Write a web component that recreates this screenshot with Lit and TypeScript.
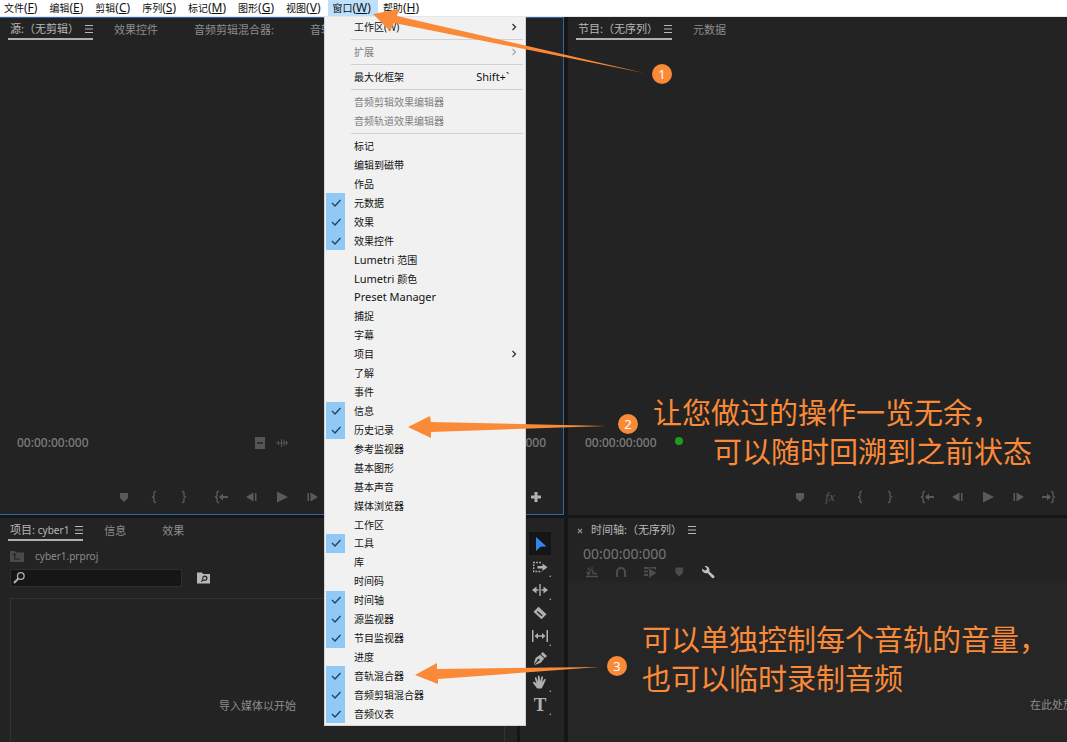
import { LitElement, html, css, svg, nothing } from "lit";
import { customElement } from "lit/decorators.js";
import { classMap } from "lit/directives/class-map.js";

type Item = { label: string; on?: boolean; off?: boolean; sub?: boolean; key?: string } | "-";

const plain = (...labels: string[]): Item[] => labels.map((label) => ({ label }));
const on = (...labels: string[]): Item[] => labels.map((label) => ({ label, on: true }));

const WINDOW_MENU: Item[] = [
  { label: "工作区(W)", sub: true },
  "-",
  { label: "扩展", sub: true, off: true },
  "-",
  { label: "最大化框架", key: "Shift+`" },
  "-",
  { label: "音频剪辑效果编辑器", off: true },
  { label: "音频轨道效果编辑器", off: true },
  "-",
  ...plain("标记", "编辑到磁带", "作品"),
  ...on("元数据", "效果", "效果控件"),
  ...plain("Lumetri 范围", "Lumetri 颜色", "Preset Manager", "捕捉", "字幕"),
  { label: "项目", sub: true },
  ...plain("了解", "事件"),
  ...on("信息", "历史记录"),
  ...plain("参考监视器", "基本图形", "基本声音", "媒体浏览器", "工作区"),
  ...on("工具"),
  ...plain("库", "时间码"),
  ...on("时间轴", "源监视器", "节目监视器"),
  ...plain("进度"),
  ...on("音轨混合器", "音频剪辑混合器", "音频仪表"),
];

const MENUS: [string, string][] = [
  ["文件", "F"], ["编辑", "E"], ["剪辑", "C"], ["序列", "S"], ["标记", "M"],
  ["图形", "G"], ["视图", "V"], ["窗口", "W"], ["帮助", "H"],
];

/* Icons are drawn on a 16 by 16 grid, filled with the current colour. */
const ICONS: Record<string, unknown> = {
  marker: svg`<path d="M4 4h8v5l-4 4-4-4z"/>`,
  markIn: svg`<path class="line" d="M10 2.500h-1l-1 1v3.500l-1.500 1 1.500 1v3.500l1 1h1"/>`,
  markOut: svg`<path class="line" d="M6 2.500h1l1 1v3.500l1.500 1-1.500 1v3.500l-1 1h-1"/>`,
  goIn: svg`<path class="line" d="M5 2.500h-1l-1 1v3.500l-1.500 1 1.500 1v3.500l1 1h1"/><path d="M5 8l4-3.500v2.500h5v2h-5v2.500z"/>`,
  goOut: svg`<path class="line" d="M11 2.500h1l1 1v3.500l1.500 1-1.500 1v3.500l-1 1h-1"/><path d="M11 8l-4-3.500v2.500h-5v2h5v2.500z"/>`,
  back: svg`<path d="M2 8l7.500-4.500v9zM11 4h1.500v8h-1.500z"/>`,
  play: svg`<path d="M3 2.500l11 5.500-11 5.500z"/>`,
  fwd: svg`<path d="M14 8l-7.500-4.500v9zM3.500 4h1.500v8h-1.500z"/>`,
  plus: svg`<path d="M6.500 3h3v3.500h3.500v3h-3.500v3.500h-3v-3.500h-3.500v-3h3.500z"/>`,
  film: svg`<path fill-rule="evenodd" d="M3 2h10v12h-10zM5 7.300v1.400h6v-1.400z"/>`,
  wave: svg`<path d="M2 7.500h12v1h-12zM4 6h1v4h-1zM7 4h1v8h-1zM9.500 5h1v6h-1zM12 6h1v4h-1z"/>`,
  lines: svg`<path d="M4 4h8v1h-8zM4 7.500h8v1h-8zM4 11h8v1h-8z"/>`,
  folderUp: svg`<path fill-rule="evenodd" d="M1 3h5l1 1.500h8v9.500h-14zM5 7v4.500h6v-1h-4.800v-3.500h1.500l-2.200-2-2.200 2z"/>`,
  folderFind: svg`<path fill-rule="evenodd" d="M1 2.500h5l1 1.500h7v9.500h-13zM8.700 5.500a2.700 2.700 0 0 0-2.200 4l-1.700 1.700.9.900 1.700-1.600a2.700 2.700 0 1 0 1.300-5zm0 1.200a1.500 1.500 0 1 1 0 3 1.500 1.500 0 0 1 0-3z"/>`,
  find: svg`<circle class="line" cx="9.800" cy="6" r="3.300"/><path class="line thick" d="M7.300 8.500l-4.300 4.500"/>`,
  nest: svg`<path class="line" d="M2 12.500h12M8 3v4M4 4l2.500 3M2.500 8.500h4M9 6.500v4M9 9l4 1M6 10l-3 .5"/>`,
  magnet: svg`<path class="line thick" d="M4 13v-5a4 4 0 0 1 8 0v5"/>`,
  linked: svg`<path d="M2 3h5v2h-5zM2 6.500h4v2h-4zM2 10h4v2h-4zM8 3h6v3l-2-1.500h-4zM7 4.500l7.500 4.300-7.500 5.200z"/>`,
  flag: svg`<path d="M4.500 3.500h7.500v5.300l-3.700 3.700-3.800-3.700z"/>`,
  wrench: svg`<path d="M4.500 2.200a4 4 0 0 1 4.800 5.200l5 4.600c.8 1.200-.9 2.800-2.100 1.900l-4.700-5a4 4 0 0 1-5.400-4.500l2.500 2.100 1.800-.5.500-1.700z"/>`,
  select: svg`<path d="M4 1l10.500 9.500-6 .3-4.500 4.200z"/>`,
  track: svg`<path class="dash" d="M9 3.500h-7.300v9h8"/><path d="M5.500 7h5v-2.500l5 3.700-5 3.700v-2.500h-5z"/>`,
  ripple: svg`<path d="M7.300 2h1.400v12h-1.400zM0 8l4.500-3.500v2.700h2v1.600h-2v2.700zM16 8l-4.500-3.500v2.700h-2v1.600h2v2.700z"/>`,
  razor: svg`<path fill-rule="evenodd" d="M6.500 1.800l8 7.500-5 4.900-8-7.500zM5.700 6l-.9.900 4.900 4.300.9-.9z"/>`,
  slip: svg`<path d="M0 2h1.500v12h-1.500zM14.500 2h1.500v12h-1.500zM2.500 8l3.500-3v2.300h4v-2.300l3.500 3-3.500 3v-2.300h-4v2.300z"/>`,
  pen: svg`<path fill-rule="evenodd" d="M10.800 1l4.200 4-2 2-4.200-4zM8.200 3.700l4 3.900-3.500 4.200-6.400 2.400 3.700-4a1.200 1.200 0 1 0-.7-.7l-3.700 4 2-6.600z"/>`,
  hand: svg`<path d="M5.200 14.500l-4-5.200c-.7-1 .5-1.900 1.400-1.200l1.900 1.500-1.600-5.200c-.2-1.200 1.200-1.500 1.600-.5l1.500 3.900-.2-5.300c.1-1.200 1.600-1.200 1.800 0l.6 5.100 1.100-4.700c.4-1.100 1.800-.8 1.700.4l-.7 4.900 1.800-2.800c.8-.9 1.900-.2 1.500.8l-2.400 5.300-1.600 3z"/>`,
};

const icon = (name: string) => html`<svg class="icon" viewBox="0 0 16 16" aria-hidden="true">${ICONS[name]}</svg>`;

const base = css`
  * { box-sizing: border-box; }
  button {
    appearance: none; border: 0; background: none; padding: 0; margin: 0;
    font: inherit; color: inherit; text-align: left; white-space: nowrap;
  }
  .icon { width: 16px; height: 16px; display: block; fill: currentColor; flex: none; }
  .line { fill: none; stroke: currentColor; stroke-width: 1.3; }
  .thick { stroke-width: 2; }
  .dash { fill: none; stroke: currentColor; stroke-width: 1.4; stroke-dasharray: 1.800 1.200; }
`;

@customElement("window-menu")
export class WindowMenu extends LitElement {
  static styles = [base, css`
    :host {
      display: flex; flex-direction: column; padding: 1px 2px 2px 1px;
      background: #f1f1f1; border: 1px solid #d4d4d4; border-top: 0;
      color: #111; font-size: 10px; max-height: calc(100vh - 33px);
    }
    .item { flex: 0 1 19px; min-height: 0; display: flex; align-items: center; }
    .tick {
      width: 19px; align-self: stretch; flex: none; color: #25405c;
      display: flex; align-items: center; justify-content: center;
    }
    .on .tick { background: #90c8f6; }
    .label { padding-left: 9px; flex: 1; line-height: 16px; }
    .key { padding-right: 14px; font-size: 11px; }
    .sub { color: #333; margin-right: 1px; }
    .off { color: #808080; }
    .off .sub { color: #aaa; }
    .latin { font-size: 11px; }
    .rule { flex: 0 0 6px; margin-left: 25px; padding: 2px 0 3px; background: #d2d2d2; background-clip: content-box; }
  `];

  label(text: string) {
    const parts = text.match(/^([A-Za-z ]+)(.*)$/);
    return parts ? html`<span class="latin">${parts[1]}</span>${parts[2]}` : text;
  }

  render() {
    return WINDOW_MENU.map((it) =>
      it === "-"
        ? html`<div class="rule" role="separator"></div>`
        : html`<button class=${classMap({ item: true, on: !!it.on, off: !!it.off })} ?disabled=${!!it.off}>
            <span class="tick">${it.on
              ? html`<svg class="icon" viewBox="0 0 16 16"><path class="line" d="M4 8l3 3 5.500-6"/></svg>`
              : nothing}</span>
            <span class="label">${this.label(it.label)}</span>
            ${it.key ? html`<span class="key">${it.key}</span>` : nothing}
            ${it.sub
              ? html`<svg class="icon sub" viewBox="0 0 16 16"><path class="line" d="M6.500 5l3 3-3 3"/></svg>`
              : nothing}
          </button>`);
  }
}

@customElement("app-root")
export class AppRoot extends LitElement {
  static styles = [base, css`
    :host {
      display: flex; flex-direction: column; height: 100vh; overflow: hidden; position: relative;
      background: #161616; color: #8c8c8c;
      font-family: "Noto Sans", "Noto Sans CJK SC", sans-serif; font-size: 11px; line-height: 16px;
    }
    .menubar {
      flex: none; height: 17px; display: flex; background: #fff; color: #111;
      font-size: 10px; border-bottom: 1px solid #e6e6e6;
    }
    .menubar button { padding: 0 7px 0 4px; margin-right: 1px; }
    .menubar .open { background: #bfe0fb; }
    .hotkey { font-size: 12px; }
    .work {
      flex: 1; min-height: 0; display: grid; gap: 3px 4px;
      grid-template-columns: minmax(0, 564fr) minmax(0, 499fr);
      grid-template-rows: minmax(0, 498fr) minmax(0, 224fr);
    }
    .panel { background: #232323; overflow: hidden; display: flex; flex-direction: column; min-width: 0; }
    .focus { border: 1px solid #2b66a8; border-left: 0; }
    .tabs { display: flex; flex: none; height: 25px; padding: 0 8px; align-items: flex-start; margin-top: 2px; }
    .focus .tabs { margin-top: 1px; }
    .tabs button { height: 21px; line-height: 19px; margin-left: 36px; flex: none; }
    .tabs .active {
      margin-left: 0; padding-left: 2px; color: #b8b8b8; border-bottom: 2px solid #b0b0b0;
      display: flex; align-items: center;
    }
    .tabs .active .icon { margin: 0 -4px 0 2px; }
    .tabs .active + button { margin-left: 21px; }
    .tabs .bare { border-bottom-color: transparent; padding-left: 7px; }
    .small { font-size: 10px; }
    .close { width: 8px; height: 8px; margin-top: 7px; }
    .screen { flex: 1; }
    .status {
      display: flex; align-items: center; height: 20px; flex: none;
      padding: 0 17px; font-size: 12px; font-weight: 500; color: #7c7c7c;
    }
    .status .view { margin-left: 163px; display: flex; gap: 6px; color: #555; }
    .status .end { margin-left: auto; }
    .dot { width: 8px; height: 8px; border-radius: 50%; background: #1e9c1e; margin: 0 0 4px 18px; }
    .transport { display: flex; align-items: center; height: 20px; flex: none; margin: 34px 0 8px; color: #5a5a5a; }
    .focus .transport { margin-bottom: 7px; }
    .transport button { width: 30px; display: flex; justify-content: center; flex: none; }
    .transport .gap { margin-left: 8px; }
    .source { padding-left: 109px; }
    .program { padding-left: 217px; }
    .transport .add { margin-left: auto; margin-right: 12px; color: #b0b0b0; }
    .fx { font-style: italic; font-family: "Liberation Serif", serif; font-size: 13px; }
    .lower { display: grid; grid-template-columns: minmax(0, 1fr) 44px; gap: 3px; min-height: 0; }
    .path { display: flex; align-items: center; gap: 10px; height: 18px; flex: none; padding: 0 9px; margin-top: 2px; font-size: 10px; }
    .path .icon { color: #4a4a4a; }
    .search { display: flex; align-items: center; gap: 14px; padding: 0 10px; margin-top: 4px; flex: none; }
    .box { display: flex; align-items: center; width: 172px; height: 18px; background: #161616; border: 1px solid #2e2e2e; color: #b0b0b0; }
    .box input { flex: 1; min-width: 0; background: none; border: 0; outline: 0; color: inherit; font: inherit; }
    .search button { color: #b8b8b8; }
    .bin {
      flex: 1; margin: 11px 12px 0 10px; border: 1px solid #323232; border-bottom: 0;
      padding-top: 99px; text-align: center;
    }
    .tools { align-items: center; padding: 14px 4px 0 0; color: #b0b0b0; }
    .tools button {
      width: 22px; height: 23px; flex: none; display: flex; align-items: center; justify-content: center;
      position: relative;
    }
    .tools .picked { background: #151515; color: #2f86ee; }
    .tools .more::after {
      content: ""; position: absolute; right: 0; bottom: 1px;
      border: 1px solid #999; border-top-color: transparent; border-left-color: transparent;
    }
    .type { font-family: "Liberation Serif", serif; font-size: 19px; line-height: 20px; font-weight: 700; }
    .timecode { font-size: 14px; line-height: 18px; color: #767676; padding-left: 15px; flex: none; }
    .options { display: flex; gap: 13px; padding-left: 16px; height: 18px; align-items: center; flex: none; color: #4c4c4c; }
    .options .lit { color: #c0c0c0; }
    .drop { flex: 1; background: #262626; padding: 116px 0 0 462px; white-space: nowrap; }
    window-menu { position: absolute; left: 324px; top: 17px; width: 202px; z-index: 2; }
    .notes { position: absolute; left: 0; top: 0; width: 1067px; height: 742px; z-index: 3; pointer-events: none; }
    .arrow { fill: #fa8a38; }
    .badge {
      position: absolute; z-index: 4; width: 20px; height: 20px; border-radius: 50%;
      background: #fa8a38; color: #fff; font-size: 13px; line-height: 20px; text-align: center;
    }
    .b1 { left: 652px; top: 64px; }
    .b2 { left: 618px; top: 414px; }
    .b3 { left: 607px; top: 656px; }
    .note {
      position: absolute; z-index: 4; margin: 0; color: #fa8a38; white-space: nowrap;
      font-family: "Noto Sans CJK SC", sans-serif; font-size: 29px; line-height: 39px;
    }
    .n2 { left: 653px; top: 392px; }
    .n3 { left: 642px; top: 619px; }
    .indent { display: block; padding-left: 60px; }
  `];

  tab(text: unknown) {
    return html`<button class="active"><span>${text}</span>${icon("lines")}</button>`;
  }

  render() {
    const buttons = (names: string[]) => names.map((n) => html`<button aria-label=${n}>${icon(n)}</button>`);
    return html`
      <nav class="menubar">
        ${MENUS.map(([name, key]) => html`<button class=${key === "W" ? "open" : ""}>${name}<span class="hotkey">(<u>${key}</u>)</span></button>`)}
      </nav>

      <main class="work">
        <section class="panel focus">
          <div class="tabs">
            ${this.tab("源:（无剪辑）")}
            <button>效果控件</button><button>音频剪辑混合器:</button><button>音轨混合器:</button>
          </div>
          <div class="screen"></div>
          <div class="status">
            <span>00:00:00:000</span>
            <span class="view">${icon("film")}${icon("wave")}</span>
            <span class="end">00:00:00:000</span>
          </div>
          <div class="transport source">
            ${buttons(["marker", "markIn", "markOut"])}
            <span class="gap"></span>
            ${buttons(["goIn", "back", "play", "fwd"])}
            <button class="add" aria-label="plus">${icon("plus")}</button>
          </div>
        </section>

        <section class="panel">
          <div class="tabs">${this.tab("节目:（无序列）")}<button>元数据</button></div>
          <div class="screen"></div>
          <div class="status"><span>00:00:00:000</span><span class="dot"></span></div>
          <div class="transport program">
            <button aria-label="marker">${icon("marker")}</button>
            <button class="fx">fx</button>
            ${buttons(["markIn", "markOut"])}
            <span class="gap"></span>
            ${buttons(["goIn", "back", "play", "fwd", "goOut"])}
          </div>
        </section>

        <div class="lower">
          <section class="panel">
            <div class="tabs">
              ${this.tab(html`项目: <span class="small">cyber1</span>`)}
              <button>信息</button><button>效果</button>
            </div>
            <div class="path">${icon("folderUp")}<span>cyber1.prproj</span></div>
            <div class="search">
              <label class="box">${icon("find")}<input type="text" aria-label="search" /></label>
              <button aria-label="find">${icon("folderFind")}</button>
            </div>
            <div class="bin">导入媒体以开始</div>
          </section>
          <section class="panel tools">
            <button class="picked" aria-label="select">${icon("select")}</button>
            <button class="more" aria-label="track">${icon("track")}</button>
            <button class="more" aria-label="ripple">${icon("ripple")}</button>
            <button aria-label="razor">${icon("razor")}</button>
            <button class="more" aria-label="slip">${icon("slip")}</button>
            <button class="more" aria-label="pen">${icon("pen")}</button>
            <button class="more" aria-label="hand">${icon("hand")}</button>
            <button class="more type">T</button>
          </section>
        </div>

        <section class="panel">
          <div class="tabs">
            <svg class="close" viewBox="0 0 8 8"><path class="line" d="M2 2l4 4M6 2l-4 4"/></svg>
            <button class="active bare">时间轴:（无序列）${icon("lines")}</button>
          </div>
          <div class="timecode">00:00:00:000</div>
          <div class="options">
            ${["nest", "magnet", "linked", "flag"].map(icon)}
            <button class="lit" aria-label="wrench">${icon("wrench")}</button>
          </div>
          <div class="drop">在此处放下媒体以创建序列。</div>
        </section>
      </main>

      <window-menu></window-menu>

      <svg class="notes" viewBox="0 0 1067 742" aria-hidden="true">
        <path class="arrow" d="M373 14L399 9L397 16L644 73L394 23L390 31Z"/>
        <path class="arrow" d="M408 427L430 416L431 422L606 426L431 432L431 438Z"/>
        <path class="arrow" d="M415 675L437 663L437 669L599 667L438 679L438 684Z"/>
      </svg>
      <span class="badge b1">1</span>
      <span class="badge b2">2</span>
      <span class="badge b3">3</span>
      <p class="note n2">让您做过的操作一览无余，<span class="indent">可以随时回溯到之前状态</span></p>
      <p class="note n3">可以单独控制每个音轨的音量，<br />也可以临时录制音频</p>
    `;
  }
}
